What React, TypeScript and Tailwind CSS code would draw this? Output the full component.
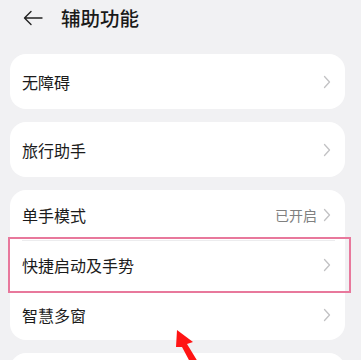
import React from "react";

const font = { fontFamily: '"Noto Sans CJK SC", "Noto Sans", sans-serif' };

function Chevron() {
  return (
    <svg width="8" height="14" viewBox="0 0 8 14" fill="none" className="shrink-0">
      <path d="M1.5 1.5 L6.5 7 L1.5 12.5" stroke="#c2c2c4" strokeWidth="1.3" strokeLinecap="round" strokeLinejoin="round" />
    </svg>
  );
}

function Row({ label, value, divider }: { label: string; value?: string; divider?: boolean }) {
  return (
    <div className="relative flex items-center h-[50px] pl-[12px] pr-[14px]">
      {divider && <div className="absolute top-0 left-[12px] right-[10px] h-px bg-[#ececee]" />}
      <span className="flex-1 text-[16px] text-[#1b1b1b]">{label}</span>
      {value && <span className="text-[14px] text-[#808080] mr-[6px]">{value}</span>}
      <Chevron />
    </div>
  );
}

export default function App() {
  return (
    <div className="relative w-[361px] h-[360px] overflow-hidden bg-[#f1f1f3]" style={font}>
      {/* Header */}
      <div className="flex items-center h-[35px] pl-[23px]">
        <svg width="20" height="16" viewBox="0 0 20 16" fill="none">
          <path d="M19 8 H2 M8 1.5 L1.5 8 L8 14.5" stroke="#222" strokeWidth="1.4" strokeLinecap="round" strokeLinejoin="round" />
        </svg>
        <span className="ml-[18px] text-[19.5px] font-medium text-[#1a1a1a] tracking-[0px]">辅助功能</span>
      </div>

      <div className="ml-[10px] mr-[16px] mt-[19px] flex flex-col gap-[13px]">
        <div className="bg-white rounded-[16px] py-[2.5px]">
          <Row label="无障碍" />
        </div>
        <div className="bg-white rounded-[16px] py-[2.5px]">
          <Row label="旅行助手" />
        </div>
        <div className="bg-white rounded-[16px]">
          <Row label="单手模式" value="已开启" />
          <Row label="快捷启动及手势" divider />
          <Row label="智慧多窗" />
        </div>
        <div className="bg-white rounded-[16px] h-[50px]" />
      </div>

      {/* highlight box */}
      <div className="absolute left-[8px] top-[237px] w-[343px] h-[56px] border-2 border-[#e8789c]" />

      {/* red arrow */}
      <svg className="absolute left-0 top-0" width="361" height="360" viewBox="0 0 361 360">
        <polygon points="177,330 193,342 187,344 198,362 190,362 182,347 176,347" fill="#ff1414" />
      </svg>
    </div>
  );
}
